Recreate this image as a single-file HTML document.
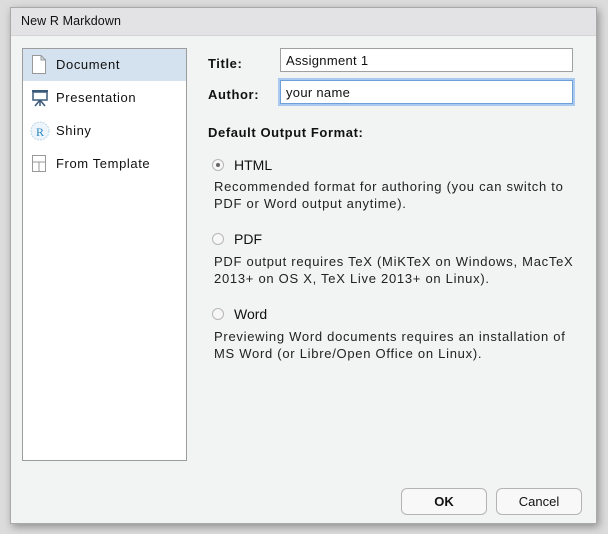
<!DOCTYPE html>
<html><head><style>
body{margin:0;width:608px;height:534px;background:#dcdcdc;font-family:"Liberation Sans",sans-serif;font-size:13px;color:#111;position:relative;overflow:hidden}
.dlg{position:absolute;left:10px;top:7px;width:585px;height:515px;background:#f2f3f3;border:1px solid #a9a9a9;box-shadow:2px 3px 8px rgba(0,0,0,.35)}
.tb{position:absolute;left:0;top:0;right:0;height:27px;background:#e3e3e6;border-bottom:1px solid #d4d4d6}
.tb span{position:absolute;left:10px;top:6px;font-size:12.5px;letter-spacing:.1px}
.abs{position:absolute}
.list{left:11px;top:40px;width:163px;height:411px;background:#fff;border:1px solid #9c9c9c}
.row{position:absolute;left:0;width:163px;height:32px}
.row span{position:absolute;left:33px;top:8px;letter-spacing:.6px}
.lbl{font-weight:bold;letter-spacing:.6px}
.inp{background:#fff;border:1px solid #a0a0a0;height:22px;width:291px;left:269px}
.inp span{position:absolute;left:5px;top:4px;letter-spacing:.3px}
.radio{width:10px;height:10px;border-radius:50%;border:1px solid #b7b7b7;background:#f7f7f7}
.desc{font-size:13px;line-height:17px;color:#222;letter-spacing:.72px;white-space:nowrap}
.btn{top:480px;width:84px;height:25px;border:1px solid #b4b4b4;border-radius:6px;background:#f8f8f8;text-align:center;line-height:25px}
</style></head><body>
<div class="dlg">
<div class="tb"><span>New R Markdown</span></div>
<div class="abs list">
 <div class="row" style="top:0;background:#d4e2ef"><svg class="abs" style="left:9px;top:6px" width="14" height="19"><path d="M.5 .5H9L13.5 5V18.5H.5Z M9 .5V5H13.5" fill="#fff" stroke="#999"/></svg><span>Document</span></div>
 <div class="row" style="top:33px"><svg class="abs" style="left:8px;top:7px" width="18" height="18"><rect x="1" y="1" width="16" height="2" fill="#3b5a7a"/><rect x="2" y="3" width="14" height="8" fill="#fff" stroke="#3b5a7a" stroke-width="1.5"/><path d="M9 11V17M9 11L4 17M9 11L14 17" stroke="#3b5a7a" stroke-width="1.5"/></svg><span>Presentation</span></div>
 <div class="row" style="top:66px"><svg class="abs" style="left:7px;top:6px" width="20" height="20"><circle cx="10" cy="10" r="9" fill="#eef5fa" stroke="#b9d5ea" stroke-dasharray="2 1"/><text x="6" y="15" font-size="12" font-family="Liberation Serif" fill="#2a86c0">R</text></svg><span>Shiny</span></div>
 <div class="row" style="top:99px"><svg class="abs" style="left:9px;top:7px" width="14" height="17"><rect x=".5" y=".5" width="13" height="16" fill="#fff" stroke="#999"/><path d="M.5 7H13.5M7 7V16.5" stroke="#999"/></svg><span>From Template</span></div>
</div>
<div class="abs lbl" style="left:197px;top:48px">Title:</div>
<div class="abs inp" style="top:40px"><span>Assignment 1</span></div>
<div class="abs lbl" style="left:197px;top:79px">Author:</div>
<div class="abs inp" style="top:72px;border:1px solid #6d9fd8;box-shadow:0 0 0 2px #a9c9f0"><span>your name</span></div>
<div class="abs lbl" style="left:197px;top:117px">Default Output Format:</div>
<div class="abs radio" style="left:201px;top:151px"><div style="width:4px;height:4px;border-radius:50%;background:#666;margin:3px"></div></div>
<div class="abs" style="left:223px;top:149px;font-size:14px">HTML</div>
<div class="abs desc" style="left:203px;top:170px">Recommended format for authoring (you can switch to<br>PDF or Word output anytime).</div>
<div class="abs radio" style="left:201px;top:225px"></div>
<div class="abs" style="left:223px;top:223px;font-size:14px">PDF</div>
<div class="abs desc" style="left:203px;top:245px">PDF output requires TeX (MiKTeX on Windows, MacTeX<br>2013+ on OS X, TeX Live 2013+ on Linux).</div>
<div class="abs radio" style="left:201px;top:300px"></div>
<div class="abs" style="left:223px;top:298px;font-size:14px">Word</div>
<div class="abs desc" style="left:203px;top:320px">Previewing Word documents requires an installation of<br>MS Word (or Libre/Open Office on Linux).</div>
<div class="abs btn" style="left:390px;font-weight:bold">OK</div>
<div class="abs btn" style="left:485px">Cancel</div>
</div>
</body></html>
